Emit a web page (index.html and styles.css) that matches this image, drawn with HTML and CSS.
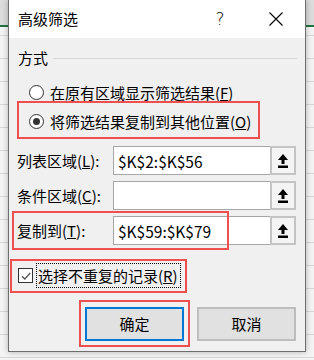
FILE: index.html
```html
<!DOCTYPE html>
<html lang="zh-CN">
<head>
<meta charset="utf-8">
<title>高级筛选</title>
<link rel="stylesheet" href="styles.css">
</head>
<body>
<div class="dialog">
  <div class="titlebar">
    <span class="title">高级筛选</span>
    <span class="help">?</span>
    <svg class="close" width="14" height="14" viewBox="0 0 14 14"><path d="M0.5 0.5L13.5 13.5M13.5 0.5L0.5 13.5" stroke="#000" stroke-width="1.1" fill="none"/></svg>
  </div>
  <div class="content">
    <div class="group-head"><span>方式</span><i class="rule"></i></div>
    <div class="radio-row"><span class="radio"></span><span>在原有区域显示筛选结果(<u>F</u>)</span></div>
    <div class="radio-row"><span class="radio on"></span><span>将筛选结果复制到其他位置(<u>O</u>)</span><span class="mark mark-radio"></span></div>
    <div class="fields">
      <div class="field-row">
        <span class="label">列表区域(<u>L</u>):</span>
        <span class="input">$K$2:$K$56</span>
        <span class="pick"><svg width="12" height="16" viewBox="0 0 12 16"><path d="M6 1L1 7H4.5V11H7.5V7H11Z" fill="#000"/><rect x="1" y="12.5" width="10" height="2.5" fill="#000"/></svg></span>
      </div>
      <div class="field-row">
        <span class="label">条件区域(<u>C</u>):</span>
        <span class="input"></span>
        <span class="pick"><svg width="12" height="16" viewBox="0 0 12 16"><path d="M6 1L1 7H4.5V11H7.5V7H11Z" fill="#000"/><rect x="1" y="12.5" width="10" height="2.5" fill="#000"/></svg></span>
      </div>
      <div class="field-row">
        <span class="label">复制到(<u>T</u>):</span>
        <span class="input">$K$59:$K$79</span>
        <span class="pick"><svg width="12" height="16" viewBox="0 0 12 16"><path d="M6 1L1 7H4.5V11H7.5V7H11Z" fill="#000"/><rect x="1" y="12.5" width="10" height="2.5" fill="#000"/></svg></span>
        <span class="mark mark-copy"></span>
      </div>
    </div>
    <div class="check-row">
      <span class="checkbox"><svg width="12" height="12" viewBox="0 0 12 12"><path d="M2 6.2L4.8 9L10.2 3" stroke="#555" stroke-width="1.3" fill="none"/></svg></span>
      <span class="focus">选择不重复的记录(<u>R</u>)</span>
      <span class="mark mark-check"></span>
    </div>
    <div class="actions">
      <span class="btn btn-primary">确定<span class="mark mark-ok"></span></span>
      <span class="btn">取消</span>
    </div>
  </div>
</div>
</body>
</html>
```
FILE: styles.css
```css
html, body {
  margin: 0;
  padding: 0;
}
body {
  width: 314px;
  height: 360px;
  overflow: hidden;
  font-family: "Noto Sans CJK SC", "Noto Sans", sans-serif;
  font-size: 15px;
  color: #000;
  background-color: #f4f4f4;
  background-image:
    linear-gradient(to bottom, #dcdcdc 0 25px, #217346 25px 27px, transparent 27px),
    repeating-linear-gradient(to bottom, transparent 0 22px, #d6d6d6 22px 23px);
  background-size: 100% 100%, 100% 23px;
  background-position: 0 0, 0 36px;
  background-repeat: no-repeat, repeat;
}
.dialog {
  margin-left: 8px;
  width: 298px;
  height: 352px;
  box-sizing: border-box;
  border: 1px solid #6e6e6e;
  border-top: none;
  background: #f0f0f0;
  box-shadow: 0 0 6px rgba(0, 0, 0, 0.28);
  display: flex;
  flex-direction: column;
}
.titlebar {
  height: 38px;
  background: #fff;
  display: flex;
  align-items: center;
  padding-left: 9px;
  padding-right: 22px;
  flex: none;
}
.title {
  line-height: 20px;
}
.help {
  margin-left: auto;
  width: 14px;
  text-align: center;
  font-size: 17px;
  line-height: 20px;
  font-family: "DejaVu Sans", sans-serif;
  font-weight: 300;
}
.close {
  margin-left: 42px;
  display: block;
}
.content {
  padding: 10px 9px 0 9px;
}
.group-head {
  display: flex;
  align-items: center;
  height: 20px;
  line-height: 20px;
}
.rule {
  flex: 1;
  height: 1px;
  background: #d9d9d9;
  margin-left: 5px;
  margin-right: -1px;
}
.radio-row {
  position: relative;
  display: flex;
  align-items: center;
  height: 29px;
  line-height: 20px;
}
.group-head + .radio-row {
  margin-top: 10px;
}
.radio {
  width: 15px;
  height: 15px;
  box-sizing: border-box;
  border: 1px solid #333;
  border-radius: 50%;
  background: #fff;
  margin-left: 11px;
  margin-right: 6px;
  display: flex;
  align-items: center;
  justify-content: center;
  flex: none;
}
.radio.on::after {
  content: "";
  width: 7px;
  height: 7px;
  border-radius: 50%;
  background: #333;
}
.mark {
  position: absolute;
  box-sizing: border-box;
  border: 2px solid #f04f4f;
  pointer-events: none;
}
.mark-radio {
  left: -1px;
  top: -6px;
  width: 243px;
  height: 38px;
}
.fields {
  margin-top: 10px;
  display: flex;
  flex-direction: column;
  gap: 6px;
}
.field-row {
  position: relative;
  display: flex;
  height: 29px;
  line-height: 20px;
}
.label {
  width: 95px;
  flex: none;
  display: flex;
  align-items: center;
  margin-left: -1px;
  padding-left: 0;
}
.label + .input {
  margin-left: 1px;
}
.input {
  width: 157px;
  flex: none;
  box-sizing: border-box;
  border: 1px solid #a6a6a6;
  border-right: none;
  background: #fff;
  display: flex;
  align-items: center;
  padding-left: 4px;
  font-size: 15.5px;
}
.pick {
  width: 26px;
  flex: none;
  box-sizing: border-box;
  border: 2px solid #c4c4c4;
  background: #f4f4f4;
  display: flex;
  align-items: center;
  justify-content: center;
}
.pick svg {
  display: block;
}
.mark-copy {
  left: -6px;
  top: -5px;
  width: 217px;
  height: 39px;
}
.check-row {
  position: relative;
  margin-top: 18px;
  height: 25px;
  display: flex;
  align-items: center;
}
.checkbox {
  width: 15px;
  height: 15px;
  box-sizing: border-box;
  border: 1px solid #333;
  background: #fff;
  display: flex;
  align-items: center;
  justify-content: center;
  flex: none;
}
.checkbox svg {
  display: block;
}
.focus {
  margin-left: 3px;
  height: 25px;
  box-sizing: border-box;
  border: 1px dotted #000;
  padding: 0 2px 0 1px;
  display: flex;
  align-items: center;
  line-height: 20px;
}
.mark-check {
  left: -8px;
  top: -4px;
  width: 177px;
  height: 34px;
}
.actions {
  margin-top: 19px;
  display: flex;
  justify-content: flex-end;
  gap: 13px;
}
.btn {
  position: relative;
  width: 99px;
  height: 34px;
  box-sizing: border-box;
  border: 2px solid #bdbdbd;
  background: #e1e1e1;
  display: flex;
  align-items: center;
  justify-content: center;
  line-height: 20px;
}
.btn-primary {
  border-color: #0078d7;
}
.mark-ok {
  left: -8px;
  top: -9px;
  width: 111px;
  height: 47px;
}
```
